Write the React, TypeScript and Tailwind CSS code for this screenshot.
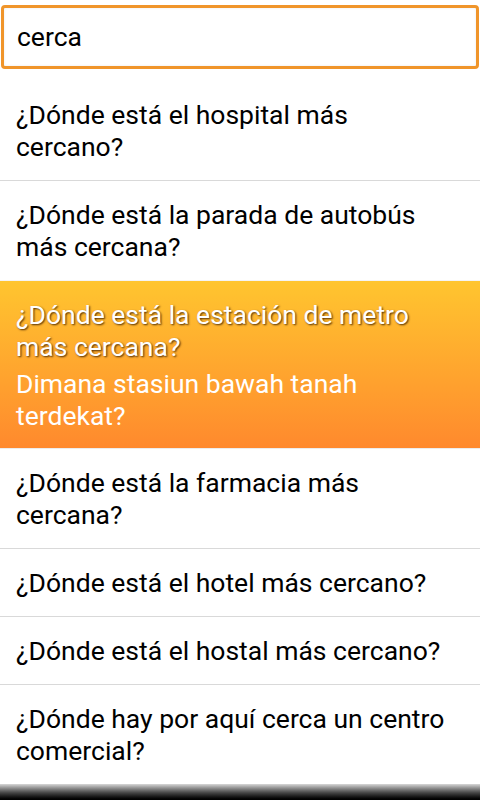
import React from "react";

const items: { es: string; id?: string; active?: boolean }[] = [
  { es: "¿Dónde está el hospital más cercano?" },
  { es: "¿Dónde está la parada de autobús más cercana?" },
  { es: "¿Dónde está la estación de metro más cercana?", id: "Dimana stasiun bawah tanah terdekat?", active: true },
  { es: "¿Dónde está la farmacia más cercana?" },
  { es: "¿Dónde está el hotel más cercano?" },
  { es: "¿Dónde está el hostal más cercano?" },
  { es: "¿Dónde hay por aquí cerca un centro comercial?" },
];

export default function App() {
  return (
    <div className="w-[480px] h-[800px] bg-white flex flex-col overflow-hidden" style={{ fontFamily: "Roboto, 'Noto Sans', sans-serif" }}>
      <div className="h-[81px] shrink-0 pt-[5px] px-[1px]">
        <div className="h-[64px] rounded-[4px] border-[3px] border-[#f0952a] bg-white flex items-center pl-[13px] shadow-[inset_0_0_3px_rgba(0,0,0,0.08)]">
          <span className="text-[26.5px] text-black leading-[32px]">cerca</span>
        </div>
      </div>
      <div className="flex-1 flex flex-col">
        {items.map((it, i) => (
          <div key={i} className="flex flex-col">
            {it.active ? (
              <div className="bg-gradient-to-b from-[#ffc52f] to-[#ff892d] pt-[18px] pb-[16px] pl-[16px] pr-[28px]">
                <div className="text-[26.5px] leading-[32px] text-white [text-shadow:1px_1px_2px_rgba(60,30,0,0.9)]">{it.es}</div>
                <div className="text-[26.5px] leading-[32px] text-white mt-[5px]">{it.id}</div>
              </div>
            ) : (
              <div className="pt-[18px] pb-[17px] pl-[16px] pr-[28px] text-[26.5px] leading-[32px] text-black">{it.es}</div>
            )}
            {i < items.length - 1 && !it.active && !items[i + 1]?.active && <div className="h-px bg-[#d9d9d9]" />}
            {i < items.length - 1 && !it.active && items[i + 1]?.active && <div className="h-px bg-[#f4f4f4]" />}
            {it.active && <div className="h-px bg-[#ececec]" />}
          </div>
        ))}
      </div>
      <div className="h-[17px] shrink-0 bg-gradient-to-b from-[#d8d8d8] via-[#4a4a4a] to-black" />
    </div>
  );
}
